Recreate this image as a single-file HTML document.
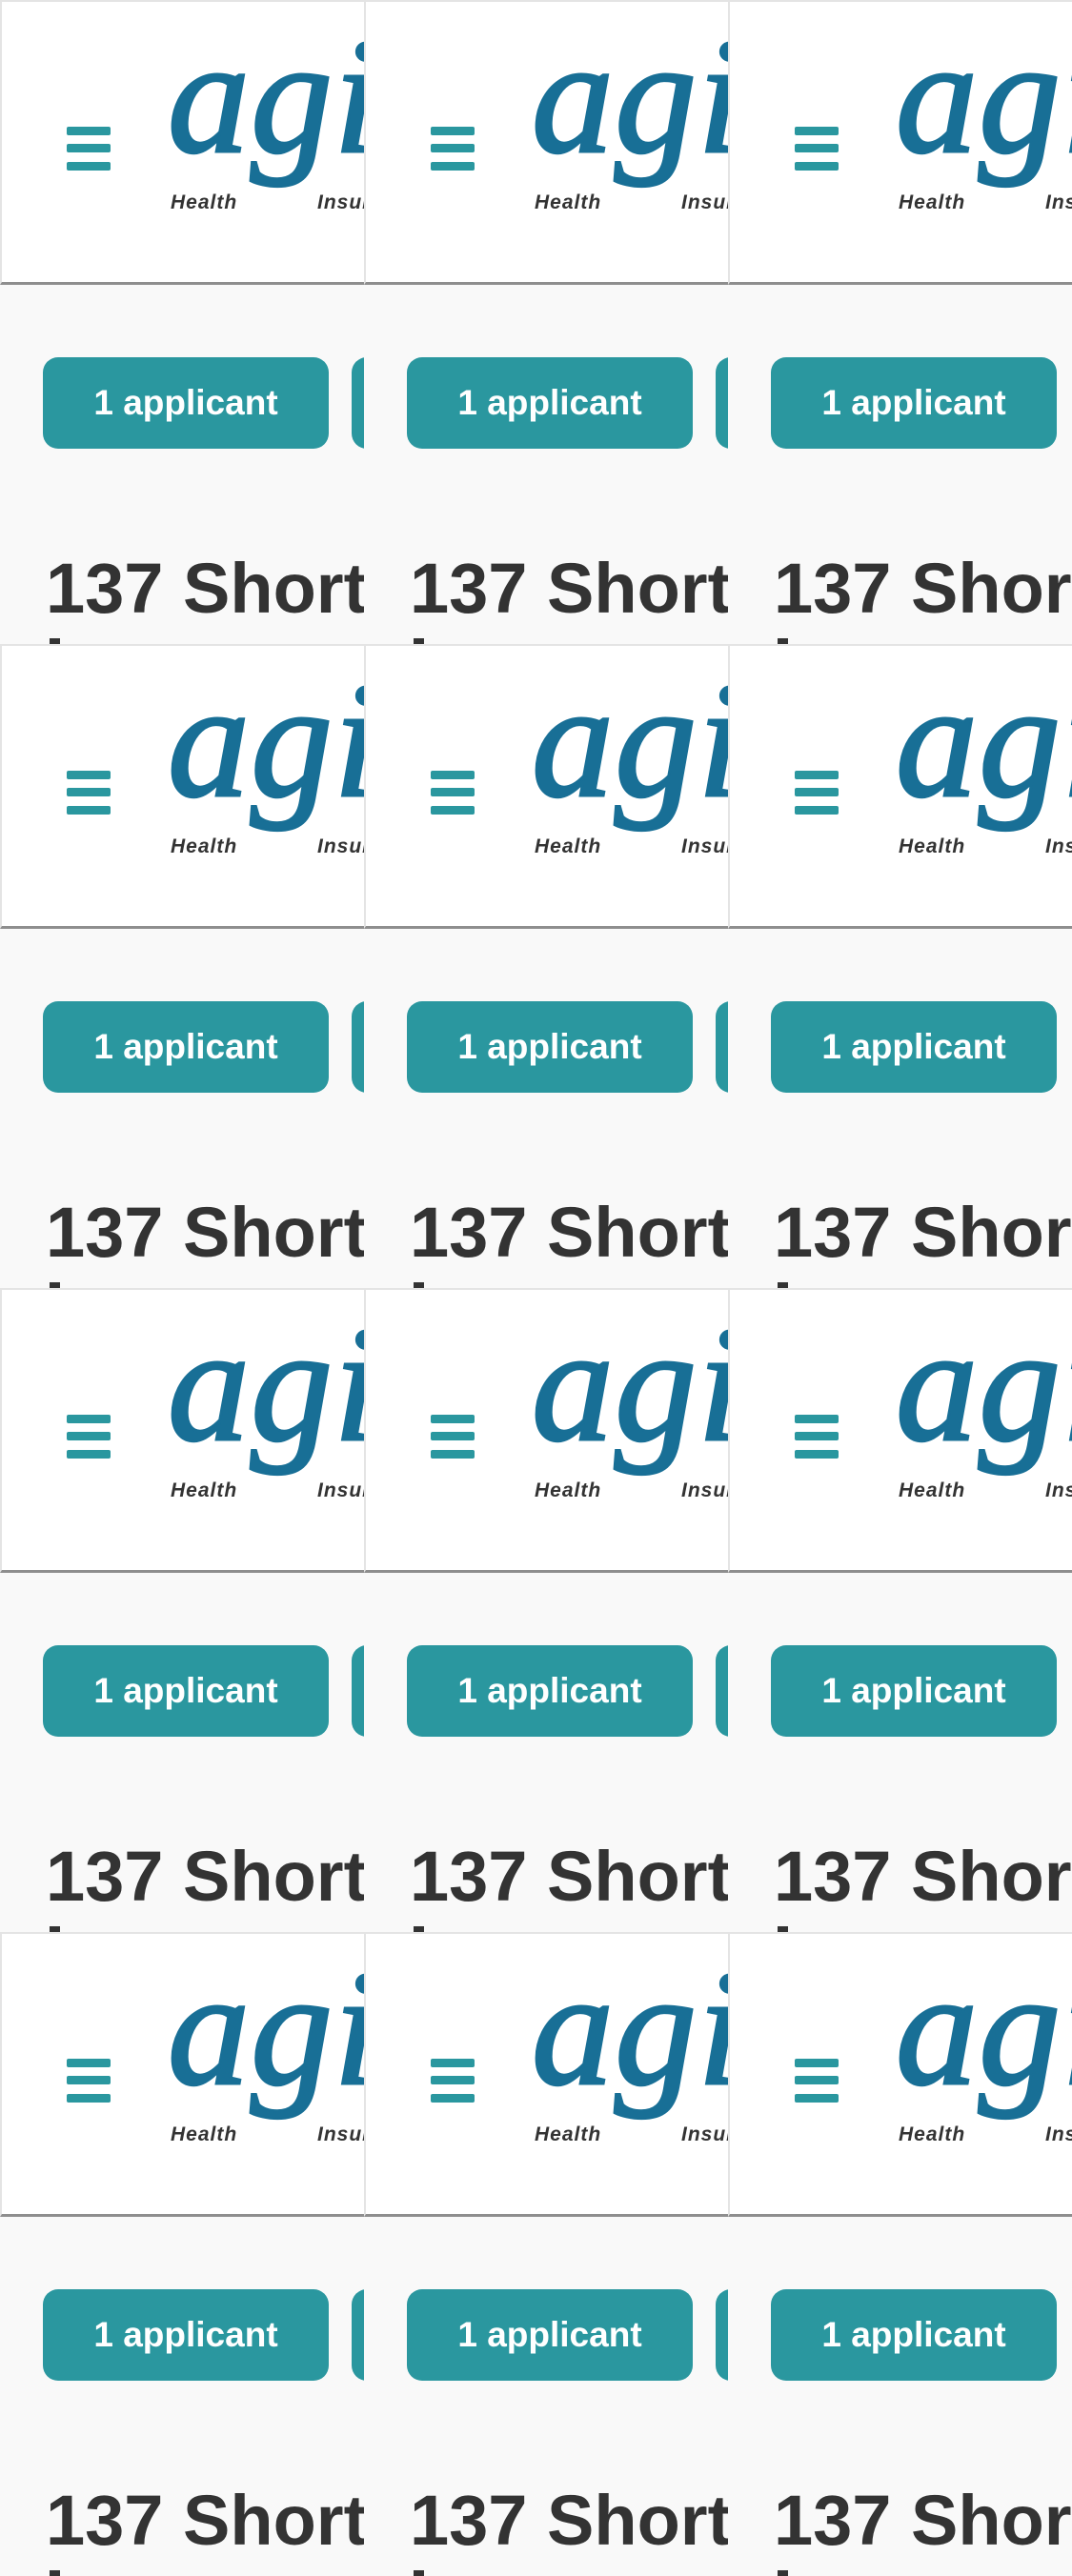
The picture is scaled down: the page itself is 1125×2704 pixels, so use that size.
<!DOCTYPE html>
<html><head><meta charset="utf-8"><style>
html,body{margin:0;padding:0}
body{width:1125px;height:2436px;overflow:hidden;background:#f9f9f9;position:relative;font-family:"Liberation Sans",sans-serif}
.t{position:absolute;width:382px;height:676px;overflow:hidden;background:#f9f9f9}
.h{position:absolute;left:0;top:0;width:382px;background:#fff;border-top:2px solid #e4e4e4;border-left:2px solid #e4e4e4;box-sizing:border-box;border-bottom:3px solid #8e8e8e;height:299px}
.b{position:absolute;left:70px;width:46px;height:9px;border-radius:2px;background:#2a979f}
.logo{position:absolute;left:176px;top:16px;font-family:"Liberation Serif",serif;font-style:italic;font-size:172px;color:#186f96;line-height:1;letter-spacing:1px;white-space:nowrap;-webkit-text-stroke:3px #186f96}
.s{position:absolute;top:201px;font-style:italic;font-weight:bold;font-size:21px;color:#333;letter-spacing:1px}
.btn{position:absolute;top:375px;height:96px;border-radius:16px;background:#2a979f;color:#fff;font-weight:bold;font-size:37px;line-height:96px;text-align:center}
.hd{position:absolute;left:48px;top:578px;font-weight:bold;font-size:74px;color:#333;white-space:nowrap;line-height:80px}
.mk{position:absolute;left:52px;top:670px;width:11px;height:6px;background:#333}
</style></head><body>
<div id="w"></div>
<script>
var html="";
var cols=[0,382,764],rows=[0,676,1352,2028];
for(var r=0;r<rows.length;r++)for(var c=0;c<3;c++){
html+='<div class="t" style="left:'+cols[c]+'px;top:'+rows[r]+'px">'+
'<div class="h"></div>'+
'<div class="b" style="top:133px"></div><div class="b" style="top:151px"></div><div class="b" style="top:170px"></div>'+
'<div class="logo">agile</div>'+
'<div class="s" style="left:179px">Health</div><div class="s" style="left:333px">Insurance</div>'+
'<div class="btn" style="left:45px;width:300px">1 applicant</div>'+
'<div class="btn" style="left:369px;width:300px"></div>'+
'<div class="hd">137 Short Term</div><div class="mk"></div>'+
'</div>';}
document.getElementById("w").innerHTML=html;
</script>
</body></html>
